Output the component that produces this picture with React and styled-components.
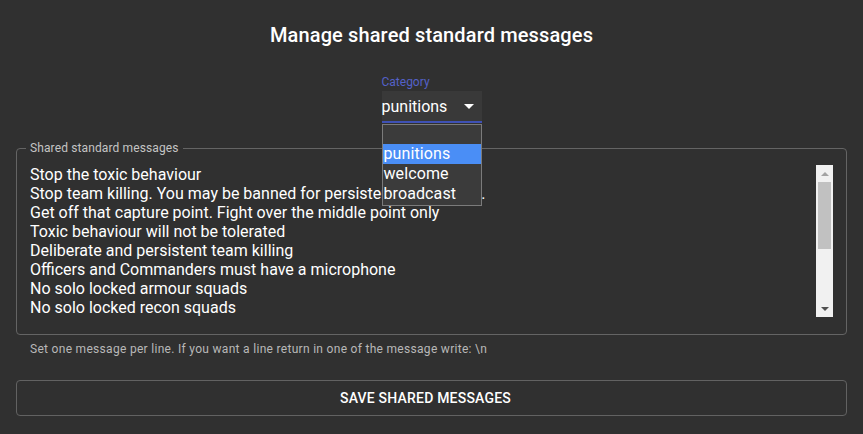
import React from "react";
import styled, { createGlobalStyle } from "styled-components";

const GlobalStyle = createGlobalStyle`
  html, body {
    margin: 0;
    padding: 0;
    background: #303030;
    font-family: Roboto, "Liberation Sans", sans-serif;
  }
`;

const Page = styled.div`
  display: flex;
  flex-direction: column;
  padding: 0 16px;
  min-height: 434px;
  box-sizing: border-box;
  background: #303030;
  color: #fff;
`;

const Title = styled.h1`
  margin: 23px 0 0;
  font-size: 20px;
  line-height: 24px;
  font-weight: 500;
  letter-spacing: 0.13px;
  text-align: center;
  color: #fff;
`;

const CategoryBlock = styled.div`
  display: flex;
  justify-content: center;
  margin: 28px 0 18px;
`;

const SelectField = styled.div`
  position: relative;
  display: flex;
  flex-direction: column;
  width: 100px;
`;

const Label = styled.label`
  font-size: 12px;
  line-height: 14px;
  height: 16px;
  color: #5461c8;
`;

const SelectBox = styled.div`
  display: flex;
  align-items: center;
  justify-content: space-between;
  height: 30px;
  padding: 0 8px 0 0;
  background: #393939;
  border-bottom: 2px solid #3f51b5;
  font-size: 16px;
  color: #fff;
`;

const Caret = styled.span`
  width: 0;
  height: 0;
  border-left: 5px solid transparent;
  border-right: 5px solid transparent;
  border-top: 5px solid #fff;
`;

const Dropdown = styled.ul`
  position: absolute;
  top: calc(100% + 1px);
  left: 0;
  width: 100px;
  box-sizing: border-box;
  margin: 0;
  padding: 0 0 1px;
  list-style: none;
  background: #3b3b3b;
  border: 1px solid #7b7b7b;
  z-index: 2;
`;

const Option = styled.li`
  height: ${(p) => (p.$blank ? "19px" : "20px")};
  line-height: ${(p) => (p.$blank ? "19px" : "20px")};
  padding-left: 1px;
  font-size: 16px;
  letter-spacing: 0.1px;
  color: #fff;
  background: ${(p) => (p.$active ? "#4a8ef6" : "transparent")};
`;

const Fieldset = styled.fieldset`
  margin: 0;
  padding: 10px 13px 17px;
  border: 1px solid #646464;
  border-radius: 4px;
  min-width: 0;
`;

const Legend = styled.legend`
  padding: 0 4px;
  margin-left: -4px;
  font-size: 12px;
  line-height: 14px;
  letter-spacing: 0.12px;
  color: #c4c4c4;
`;

const EditorRow = styled.div`
  display: flex;
  height: 152px;
`;

const TextArea = styled.textarea`
  flex: 1;
  margin: 0;
  padding: 0;
  border: none;
  outline: none;
  resize: none;
  overflow: hidden;
  background: transparent;
  color: #fff;
  font-family: Roboto, "Liberation Sans", sans-serif;
  font-size: 16px;
  line-height: 19px;
  white-space: pre;
`;

const Scrollbar = styled.div`
  display: flex;
  flex-direction: column;
  width: 17px;
  background: #f1f1f1;
`;

const ScrollButton = styled.div`
  display: flex;
  align-items: center;
  justify-content: center;
  height: 17px;
`;

const Arrow = styled.span`
  width: 0;
  height: 0;
  border-left: 4px solid transparent;
  border-right: 4px solid transparent;
  ${(p) =>
    p.$up
      ? "border-bottom: 4px solid #a3a3a3;"
      : "border-top: 4px solid #505050;"}
`;

const Track = styled.div`
  flex: 1;
  padding: 0 2px;
`;

const Thumb = styled.div`
  height: 67px;
  background: #c1c1c1;
`;

const Helper = styled.p`
  margin: 7px 0 0 14px;
  font-size: 12px;
  line-height: 14px;
  letter-spacing: 0.3px;
  color: #b8b8b8;
`;

const SaveButton = styled.button`
  margin-top: 24px;
  height: 36px;
  padding: 0 12px 0 0;
  background: transparent;
  border: 1px solid #626262;
  border-radius: 4px;
  color: #fff;
  font-family: Roboto, "Liberation Sans", sans-serif;
  font-size: 14px;
  font-weight: 500;
  letter-spacing: 0.2px;
  text-transform: uppercase;
  cursor: pointer;
`;

const messages = [
  "Stop the toxic behaviour",
  "Stop team killing. You may be banned for persistent team killing.",
  "Get off that capture point. Fight over the middle point only",
  "Toxic behaviour will not be tolerated",
  "Deliberate and persistent team killing",
  "Officers and Commanders must have a microphone",
  "No solo locked armour squads",
  "No solo locked recon squads",
  "Stop ghosting, it is not allowed",
  "Respect the admins and other players",
  "No racism or hate speech",
  "Squad leaders must communicate with command",
  "Do not waste assets",
  "Join a squad and follow orders",
].join("\n");

const categories = ["", "punitions", "welcome", "broadcast"];

export default function App() {
  return (
    <>
      <GlobalStyle />
      <Page>
        <Title>Manage shared standard messages</Title>
        <CategoryBlock>
          <SelectField>
            <Label>Category</Label>
            <SelectBox>
              punitions
              <Caret />
            </SelectBox>
            <Dropdown>
              {categories.map((c, i) => (
                <Option key={i} $blank={c === ""} $active={c === "punitions"}>
                  {c}
                </Option>
              ))}
            </Dropdown>
          </SelectField>
        </CategoryBlock>
        <Fieldset>
          <Legend>Shared standard messages</Legend>
          <EditorRow>
            <TextArea defaultValue={messages} spellCheck={false} />
            <Scrollbar>
              <ScrollButton>
                <Arrow $up />
              </ScrollButton>
              <Track>
                <Thumb />
              </Track>
              <ScrollButton>
                <Arrow />
              </ScrollButton>
            </Scrollbar>
          </EditorRow>
        </Fieldset>
        <Helper>
          Set one message per line. If you want a line return in one of the message write: \n
        </Helper>
        <SaveButton>Save shared messages</SaveButton>
      </Page>
    </>
  );
}
